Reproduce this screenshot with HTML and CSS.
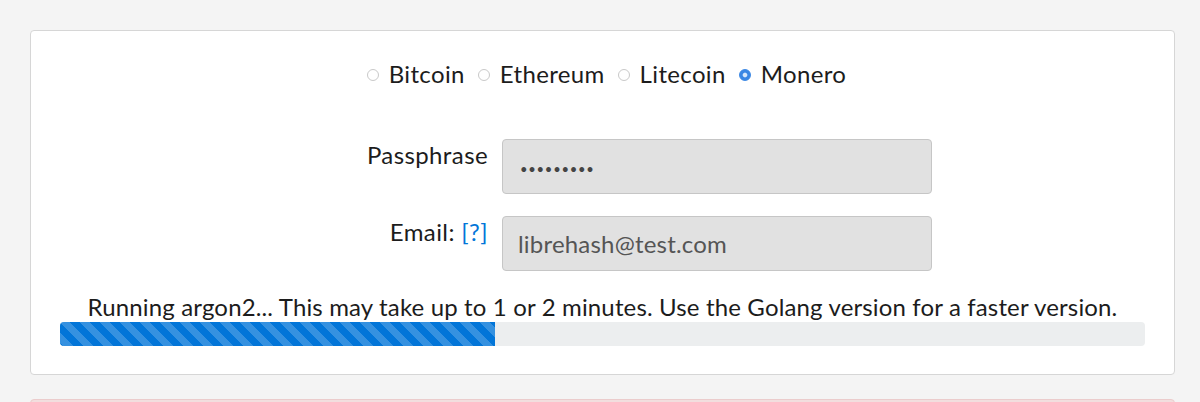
FILE: index.html
```html
<!DOCTYPE html>
<html lang="en">
<head>
<meta charset="utf-8">
<title>Paper wallet</title>
<link rel="stylesheet" href="styles.css">
</head>
<body>
<div class="page">
  <div class="card">
    <div class="coins">
      <label class="coin"><input type="radio" name="coin" class="radio"><span>Bitcoin</span></label>
      <label class="coin"><input type="radio" name="coin" class="radio"><span>Ethereum</span></label>
      <label class="coin"><input type="radio" name="coin" class="radio"><span>Litecoin</span></label>
      <label class="coin"><input type="radio" name="coin" class="radio" checked><span>Monero</span></label>
    </div>
    <div class="form">
      <label class="form-label" for="pass">Passphrase</label>
      <input class="field field-pass" id="pass" type="password" value="123456789" disabled>
      <label class="form-label" for="email">Email: <a class="help" href="#">[?]</a></label>
      <input class="field" id="email" type="text" value="librehash@test.com" disabled>
    </div>
    <div class="status">Running argon2... This may take up to 1 or 2 minutes. Use the Golang version for a faster version.</div>
    <div class="progress"><div class="progress-bar" style="width:40.1%"></div></div>
  </div>
  <div class="alert"></div>
</div>
</body>
</html>
```
FILE: styles.css
```css
html, body {
  margin: 0;
  padding: 0;
  background: #f4f4f4;
}
body {
  font-family: "Lato", "Open Sans", sans-serif;
  font-size: 24px;
  color: #1c1c1c;
  height: 402px;
  overflow: hidden;
}
.page {
  padding: 30px 25px 0 30px;
}
.card {
  background: #fff;
  border: 1px solid #d6d6d6;
  border-radius: 4px;
  padding: 28px 29px 28px;
}
.coins {
  display: flex;
  justify-content: center;
  align-items: center;
  gap: 13px;
  padding-left: 8px;
  line-height: 30px;
  height: 30px;
  letter-spacing: 0.35px;
}
.coin {
  display: flex;
  align-items: center;
  gap: 10px;
  cursor: pointer;
}
.radio {
  appearance: none;
  -webkit-appearance: none;
  margin: 2px 0 0 0;
  width: 12px;
  height: 12px;
  border: 1px solid #c9c9c9;
  border-radius: 50%;
  background: #fff;
  box-sizing: border-box;
}
.radio:checked {
  border-color: #3a87e4;
  background: radial-gradient(circle, #d6e7fb 0 1.6px, #a9ccf5 2.1px, #3a87e4 2.8px);
}
.form {
  margin-top: 50px;
  display: grid;
  grid-template-columns: 428px 430px;
  column-gap: 14px;
  row-gap: 22px;
}
.form-label {
  text-align: right;
  line-height: 30px;
  padding-top: 1px;
  letter-spacing: 0.4px;
}
.help {
  color: #0275d8;
  text-decoration: none;
}
.field {
  box-sizing: border-box;
  width: 430px;
  height: 55px;
  margin: 0;
  padding: 0 15px;
  border: 1px solid #c6c6c6;
  border-radius: 4px;
  background: #e1e1e1;
  color: #555;
  font-family: "Lato", "Open Sans", sans-serif;
  font-size: 24px;
  line-height: 30px;
  opacity: 1;
  -webkit-text-fill-color: #555;
  letter-spacing: 0.2px;
}
.field-pass {
  font-size: 13px;
  letter-spacing: 0.75px;
  padding: 4px 0 0 17px;
  color: #444;
  -webkit-text-fill-color: #444;
}
.status {
  margin-top: 21px;
  text-align: center;
  line-height: 30px;
  letter-spacing: 0.15px;
}
.progress {
  height: 24px;
  background: #eceeef;
  border-radius: 4px;
  overflow: hidden;
}
.progress-bar {
  height: 100%;
  background-color: #0275d8;
  background-image: linear-gradient(45deg,
    rgba(255,255,255,.2) 25%, transparent 25%,
    transparent 50%, rgba(255,255,255,.2) 50%,
    rgba(255,255,255,.2) 75%, transparent 75%, transparent);
  background-size: 20px 20px;
}
.alert {
  margin-top: 24px;
  height: 40px;
  background: #f2dede;
  border: 1px solid #ebcccc;
  border-radius: 4px;
}
```
